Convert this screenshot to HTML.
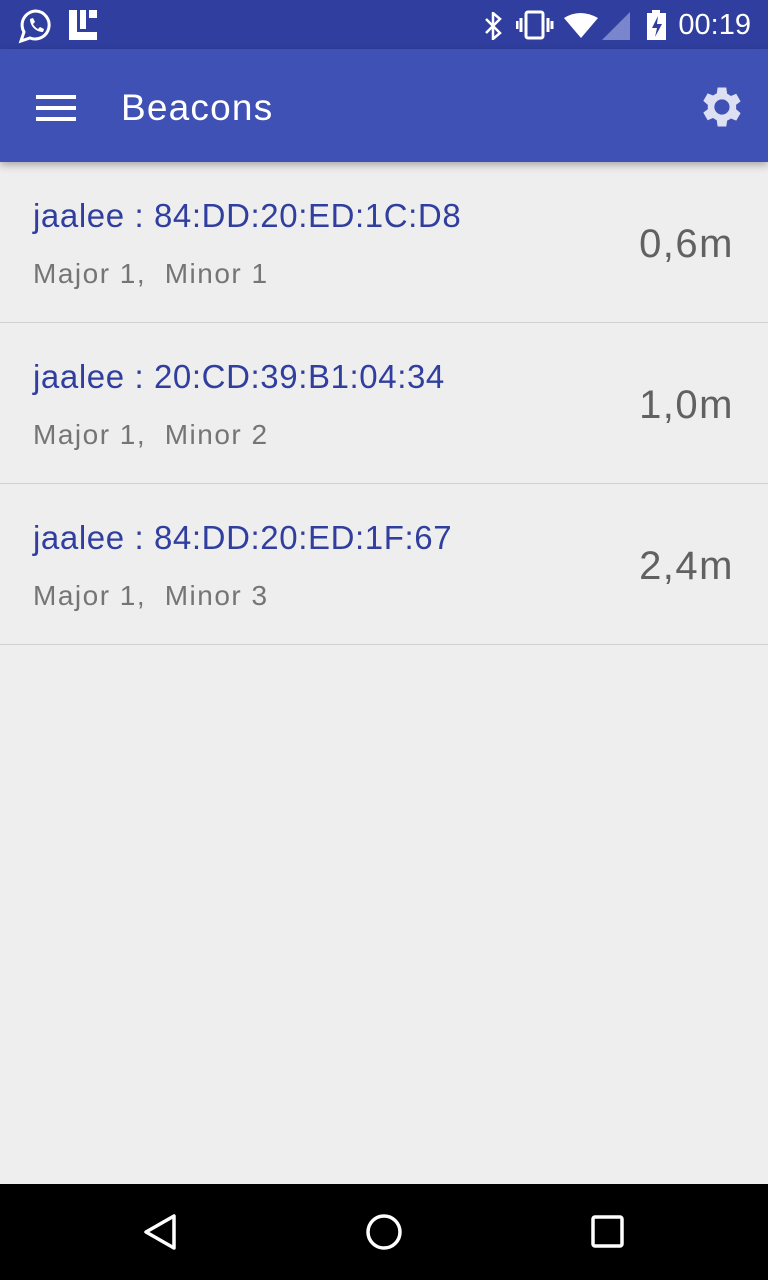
<!DOCTYPE html>
<html><head><meta charset="utf-8"><style>
body{margin:0;width:768px;height:1280px;background:#eeeeee;font-family:"Liberation Sans",sans-serif;position:relative;overflow:hidden}
.sb{position:absolute;top:0;left:0;width:768px;height:49px;background:#303f9f}
.ab{position:absolute;top:49px;left:0;width:768px;height:113px;background:#3f51b5;box-shadow:0 3px 8px rgba(0,0,0,.3)}
.t{position:absolute;left:121px;top:38px;color:#fff;font-size:37px;letter-spacing:1.2px}
.row{position:absolute;left:0;width:768px;height:160px;border-bottom:1px solid #d0d0d0}
.n{position:absolute;left:33px;top:35px;color:#303f9f;font-size:33px;letter-spacing:0.6px}
.s{position:absolute;left:33px;top:96px;color:#757575;font-size:28px;letter-spacing:1.5px}
.d{position:absolute;right:34px;top:60px;color:#616161;font-size:40px;letter-spacing:1.5px}
.nav{position:absolute;top:1184px;left:0;width:768px;height:96px;background:#000}
.tm{position:absolute;right:17px;top:9px;color:#fff;font-size:29px}
</style></head><body>
<div class="sb">
<svg style="position:absolute;left:18px;top:8px" width="36" height="36" viewBox="0 0 36 36"><path d="M18 3a14 14 0 0 0-12 21l-3 9 9-3A14 14 0 1 0 18 3z" fill="none" stroke="#fff" stroke-width="3"/><path d="M12 11c0 7 6 13 13 13l1-3-4-2-2 2c-2-1-4-3-5-5l2-2-2-4z" fill="#fff"/></svg>
<svg style="position:absolute;left:69px;top:10px" width="30" height="30"><path d="M0 0h8v22h20v8H0z M11 0h6v19H11z M20 0h8v8h-8z" fill="#fff"/></svg>
<svg style="position:absolute;left:482px;top:12px" width="22" height="28"><path d="M4 7l14 14-7 6V1l7 6L4 21" fill="none" stroke="#fff" stroke-width="2.5"/></svg>
<svg style="position:absolute;left:516px;top:10px" width="38" height="30"><rect x="10" y="2" width="17" height="26" rx="2" fill="none" stroke="#fff" stroke-width="3"/><path d="M5 8v14M1 11v8M32 8v14M36 11v8" stroke="#fff" stroke-width="3"/></svg>
<svg style="position:absolute;left:562px;top:12px" width="72" height="28"><path d="M2 6Q18-4 36 6L19 26z" fill="#fff"/><path d="M68 0v28H40z" fill="#7986cb"/></svg>
<svg style="position:absolute;left:646px;top:10px" width="22" height="30"><path d="M6 0h8v3h6v27H1V3h5z" fill="#fff"/><path d="M12 6l-6 12h5l-2 9 7-13h-5z" fill="#303f9f"/></svg>
<div class="tm">00:19</div>
</div>
<div class="ab">
<svg style="position:absolute;left:36px;top:45px" width="40" height="28"><path d="M0 3h40M0 14h40M0 25h40" stroke="#fff" stroke-width="4"/></svg>
<div class="t">Beacons</div>
<svg style="position:absolute;left:694px;top:32px" width="52" height="52" viewBox="0 0 24 24"><path fill="#dde0f3" d="M19.4 13a7.5 7.5 0 0 0 0-2l2.1-1.6-2-3.5-2.5 1a7 7 0 0 0-1.7-1L14.9 3h-4l-.4 2.7a7 7 0 0 0-1.7 1l-2.5-1-2 3.5L6.4 11a7.5 7.5 0 0 0 0 2l-2.1 1.6 2 3.5 2.5-1a7 7 0 0 0 1.7 1l.4 2.9h4l.4-2.7a7 7 0 0 0 1.7-1l2.5 1 2-3.5zM12.9 15.5a3.5 3.5 0 1 1 0-7 3.5 3.5 0 0 1 0 7z"/></svg>
</div>
<div class="row" style="top:162px"><div class="n">jaalee : 84:DD:20:ED:1C:D8</div><div class="s">Major 1,&nbsp; Minor 1</div><div class="d">0,6m</div></div>
<div class="row" style="top:323px"><div class="n">jaalee : 20:CD:39:B1:04:34</div><div class="s">Major 1,&nbsp; Minor 2</div><div class="d">1,0m</div></div>
<div class="row" style="top:484px"><div class="n">jaalee : 84:DD:20:ED:1F:67</div><div class="s">Major 1,&nbsp; Minor 3</div><div class="d">2,4m</div></div>
<div class="nav">
<svg style="position:absolute;left:140px;top:28px" width="40" height="40"><path d="M34 4v32L6 20z" fill="none" stroke="#fff" stroke-width="3.5" stroke-linejoin="round"/></svg>
<svg style="position:absolute;left:364px;top:28px" width="40" height="40"><circle cx="20" cy="20" r="16" fill="none" stroke="#fff" stroke-width="3.5"/></svg>
<svg style="position:absolute;left:590px;top:30px" width="36" height="36"><rect x="3" y="3" width="29" height="29" rx="2" fill="none" stroke="#fff" stroke-width="3.5"/></svg>
</div>
</body></html>
